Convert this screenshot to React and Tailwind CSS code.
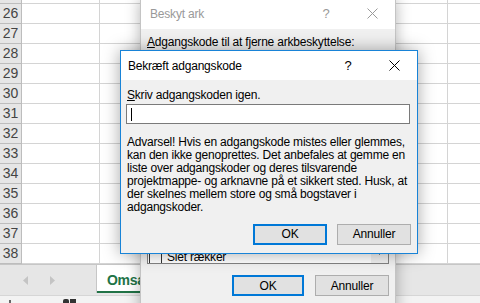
import React from 'react';

const ROWS = [25, 26, 27, 28, 29, 30, 31, 32, 33, 34, 35, 36, 37, 38];

function CloseIcon({ color = '#000' }) {
    return (
        <svg width="11" height="11" viewBox="0 0 11 11">
            <path d="M0.5 0.5 L10.5 10.5 M10.5 0.5 L0.5 10.5" stroke={color} strokeWidth="1" fill="none" />
        </svg>
    );
}

function Sheet() {
    return (
        <div className="-mt-[16px] flex flex-col">
            {ROWS.map((n) => (
                <div key={n} className="flex h-[20px]">
                    <div className="flex w-[22px] items-center justify-center border-r border-b border-[#bdbdbd] bg-[#e6e6e6] text-[14px] text-[#444]">
                        {/* row 25 is scrolled off, only its bottom edge shows */}
                        {n > 25 ? n : null}
                    </div>
                    <div className="w-[78px] border-r border-b border-[#d4d4d4]" />
                    <div className="w-[348px] border-r border-b border-[#d4d4d4]" />
                    <div className="flex-1 border-b border-[#d4d4d4]" />
                </div>
            ))}
        </div>
    );
}

function TabBar() {
    return (
        <div className="flex h-[31px] border-t border-[#c6c6c6] bg-[#e6e6e6]">
            <div className="flex w-[96px] items-center gap-[22px] pl-[23px]">
                <svg width="5" height="9" viewBox="0 0 5 9">
                    <path d="M5 0 L0 4.5 L5 9 Z" fill="#c4c4c4" />
                </svg>
                <svg width="5" height="9" viewBox="0 0 5 9">
                    <path d="M0 0 L5 4.5 L0 9 Z" fill="#c4c4c4" />
                </svg>
            </div>
            <div className="flex h-[28px] flex-col border-l border-[#c6c6c6] bg-white">
                <div className="flex flex-1 items-center pl-[10px] pr-[11px] pt-[4px] text-[14px] font-bold tracking-[-0.3px] text-[#217346]">
                    Omsætning
                </div>
                <div className="h-[2px] bg-[#217346]" />
            </div>
        </div>
    );
}

function StatusBar() {
    return (
        <div className="flex h-[8px] items-end border-t border-[#d6d6d6] bg-[#f3f3f3]">
            <div className="ml-[9px] h-[3px] w-[2px] bg-[#666]" />
            <div className="ml-[52px] flex gap-[1px]">
                <div className="h-[4px] w-[6px] rounded-t-[2px] bg-[#333]" />
                <div className="h-[4px] w-[6px] bg-[#333]" />
            </div>
        </div>
    );
}

function Button({ children, primary, width }) {
    return (
        <div
            className={
                primary
                    ? `flex h-[21px] items-center justify-center border-2 border-[#0078d7] bg-[#e1e1e1] text-[12px] text-black ${width}`
                    : `flex h-[21px] items-center justify-center border border-[#adadad] bg-[#e1e1e1] text-[12px] text-black ${width}`
            }
        >
            {children}
        </div>
    );
}

function BackDialog() {
    return (
        <div className="absolute left-[140px] top-[-1px] w-[256px] border border-[#c4c4c4] bg-[#f0f0f0] tracking-[-0.2px] shadow-[0_0_14px_rgba(0,0,0,0.3)]">
            <div className="flex h-[29px] items-center bg-white text-[12px] text-[#999]">
                <div className="flex-1 pl-[9px] pb-[2px]">Beskyt ark</div>
                <div className="w-[46px] pb-[2px] text-center text-[13px]">?</div>
                <div className="flex w-[46px] items-center justify-center pb-[2px]">
                    <CloseIcon color="#9a9a9a" />
                </div>
            </div>
            <div className="flex flex-col px-[6px] pb-[20px]">
                <div className="whitespace-nowrap pt-[7px] text-[12px] leading-[13px] text-black">
                    <span className="underline">A</span>dgangskode til at fjerne arkbeskyttelse:
                </div>
                <div className="mt-[11px] flex h-[204px] overflow-hidden border border-[#828282] bg-white">
                    <div className="flex flex-1 flex-col justify-end">
                        <div className="-mb-[1px] flex items-center gap-[5px] pl-[1px] text-[12px] leading-[14px]">
                            <div className="h-[13px] w-[13px] border border-[#333] bg-white" />
                            <span>Slet rækker</span>
                        </div>
                    </div>
                    <div className="flex w-[17px] flex-col justify-end bg-[#f0f0f0]">
                        <div className="flex h-[17px] items-center justify-center pb-[4px]">
                            <svg width="7" height="4" viewBox="0 0 7 4">
                                <path d="M0.5 0.5 L3.5 3.5 L6.5 0.5" stroke="#606060" strokeWidth="1" fill="none" />
                            </svg>
                        </div>
                    </div>
                </div>
                <div className="mt-[11px] flex justify-end gap-[11px]">
                    <Button primary width="w-[72px]">OK</Button>
                    <Button width="w-[74px]">Annuller</Button>
                </div>
            </div>
        </div>
    );
}

function FrontDialog() {
    return (
        <div className="absolute left-[120px] top-[50px] w-[298px] border border-[#1883d7] bg-[#f0f0f0] tracking-[-0.2px] shadow-[0_0_16px_rgba(0,0,0,0.35)]">
            <div className="flex h-[29px] items-center bg-white text-[12px] text-black">
                <div className="flex-1 pl-[7px]">Bekræft adgangskode</div>
                <div className="w-[46px] text-center text-[13px]">?</div>
                <div className="flex w-[46px] items-center justify-center">
                    <CloseIcon />
                </div>
            </div>
            <div className="flex flex-col px-[5px] pt-[9px] pb-[8px] text-[12px] leading-[13px] text-black">
                <div className="pl-[1px]">
                    <span className="underline">S</span>kriv adgangskoden igen.
                </div>
                <div className="mt-[2px] flex h-[20px] w-[284px] items-center border border-[#7a7a7a] bg-white pl-[4px]">
                    <div className="h-[13px] w-[1px] bg-black" />
                </div>
                <div className="mt-[12px] whitespace-nowrap pl-[1px]">
                    Advarsel! Hvis en adgangskode mistes eller glemmes,
                    <br />
                    kan den ikke genoprettes. Det anbefales at gemme en
                    <br />
                    liste over adgangskoder og deres tilsvarende
                    <br />
                    projektmappe- og arknavne på et sikkert sted. Husk, at
                    <br />
                    der skelnes mellem store og små bogstaver i
                    <br />
                    adgangskoder.
                </div>
                <div className="mt-[10px] flex justify-end gap-[10px] pr-[1px]">
                    <Button primary width="w-[74px]">OK</Button>
                    <Button width="w-[74px]">Annuller</Button>
                </div>
            </div>
        </div>
    );
}

export default function App() {
    return (
        <div className="relative h-[303px] w-[480px] overflow-hidden bg-white font-['Segoe_UI','Liberation_Sans',sans-serif]">
            <Sheet />
            <TabBar />
            <StatusBar />
            <BackDialog />
            <FrontDialog />
        </div>
    );
}
